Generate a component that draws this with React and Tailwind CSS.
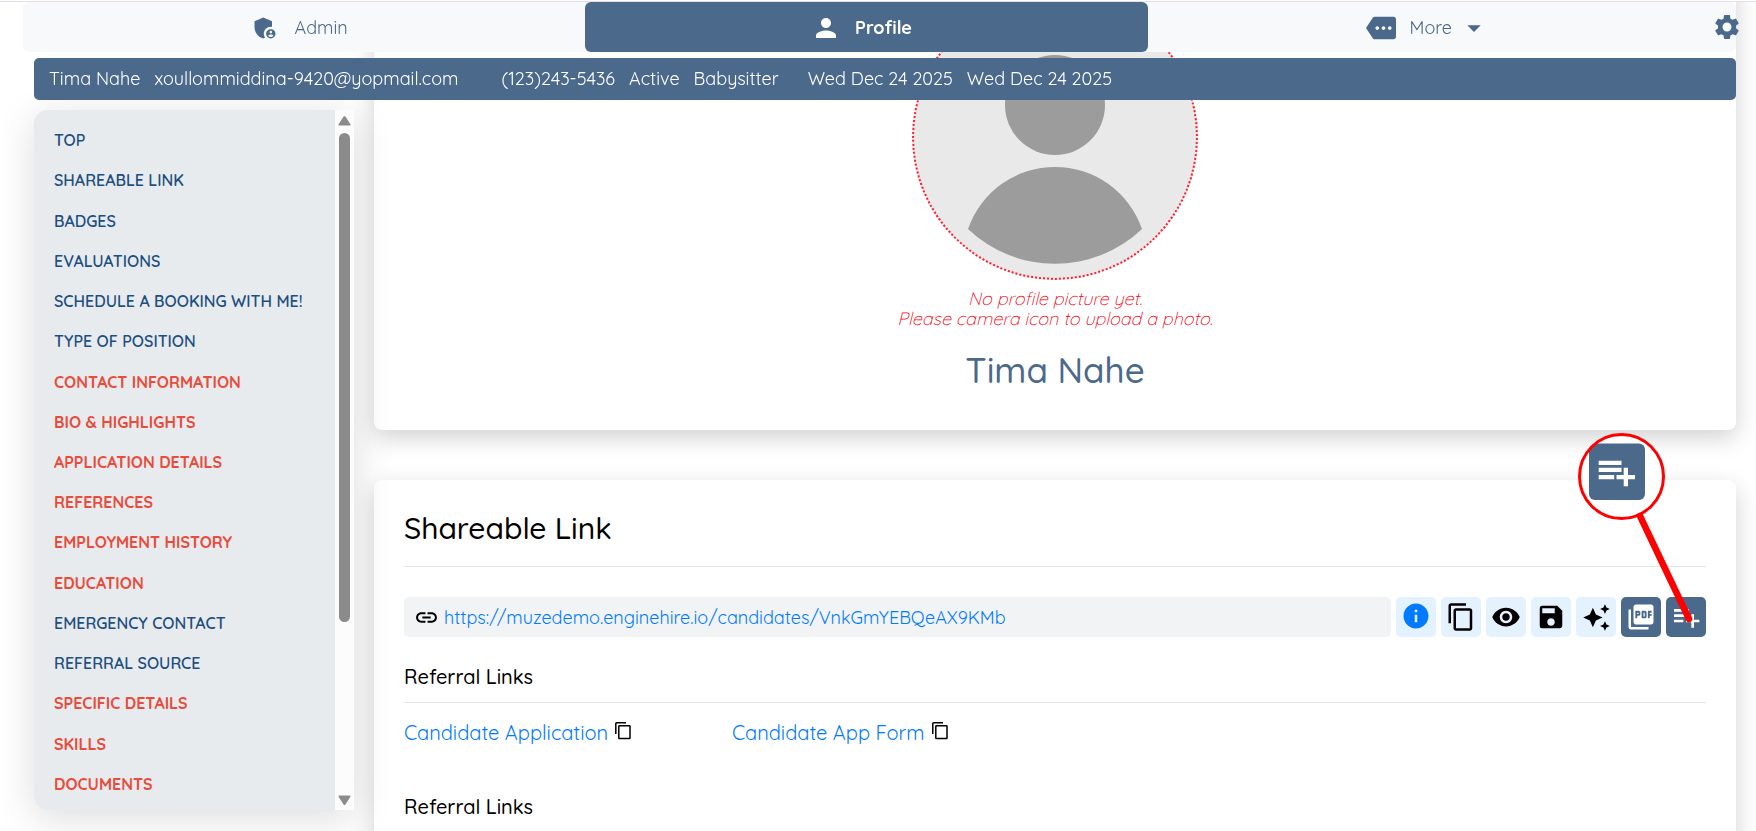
import React from "react";
import {
  MdAdminPanelSettings,
  MdArrowDropDown,
  MdAutoAwesome,
  MdContentCopy,
  MdInfo,
  MdLink,
  MdMore,
  MdPerson,
  MdPictureAsPdf,
  MdPlaylistAdd,
  MdRemoveRedEye,
  MdSave,
  MdSettings,
} from "react-icons/md";

const sections = [
  ["TOP", false],
  ["SHAREABLE LINK", false],
  ["BADGES", false],
  ["EVALUATIONS", false],
  ["SCHEDULE A BOOKING WITH ME!", false],
  ["TYPE OF POSITION", false],
  ["CONTACT INFORMATION", true],
  ["BIO & HIGHLIGHTS", true],
  ["APPLICATION DETAILS", true],
  ["REFERENCES", true],
  ["EMPLOYMENT HISTORY", true],
  ["EDUCATION", true],
  ["EMERGENCY CONTACT", false],
  ["REFERRAL SOURCE", false],
  ["SPECIFIC DETAILS", true],
  ["SKILLS", true],
  ["DOCUMENTS", true],
];

const actions = [
  { label: "Information", Icon: MdInfo, size: 30, tone: "bg-[#e4f1ff] text-[#007bff] pb-0.5" },
  { label: "Copy link", Icon: MdContentCopy, size: 30, tone: "bg-[#e4f1ff] text-black" },
  { label: "Preview", Icon: MdRemoveRedEye, size: 30, tone: "bg-[#e4f1ff] text-black" },
  { label: "Save", Icon: MdSave, size: 30, tone: "bg-[#e4f1ff] text-black" },
  { label: "Generate", Icon: MdAutoAwesome, size: 29, tone: "bg-[#e4f1ff] text-black" },
  { label: "Export PDF", Icon: MdPictureAsPdf, size: 30, tone: "bg-[#4b698b] text-white" },
  { label: "Add to list", Icon: MdPlaylistAdd, size: 32, tone: "bg-[#4b698b] text-white" },
];

function Header() {
  return (
    <header className="fixed inset-x-0 top-0 z-20 border-t border-white">
      <div className="border-t border-[#e6dcea] pl-[23px] pr-5">
        <nav className="flex h-[50px] rounded-md bg-[#f8f9fb] text-lg text-[#4b698b]">
          <a href="#admin" className="flex flex-1 items-center justify-center gap-4 pr-2.5 pt-0.5">
            <MdAdminPanelSettings size={28} />
            Admin
          </a>
          <a href="#profile" className="flex flex-1 items-center justify-center gap-3.5 rounded-md bg-[#4b698b] pr-2.5 pt-0.5 font-bold text-white">
            <MdPerson size={30} />
            Profile
          </a>
          <button className="flex flex-1 items-center justify-center gap-3.5 pl-1 pr-1.5 pt-0.5">
            <MdMore size={30} />
            More
            <span className="-ml-2">
              <MdArrowDropDown size={32} />
            </span>
          </button>
          <button aria-label="Settings" className="-mr-2 flex w-[34px] items-center justify-center">
            <MdSettings size={30} />
          </button>
        </nav>
      </div>
      <div className="ml-[34px] mr-5 mt-1.5 flex h-[42px] items-center gap-[14px] whitespace-nowrap rounded-[5px] bg-[#4b698b] px-[15px] text-lg text-white">
        <span>Tima Nahe</span>
        <span>xoullommiddina-9420@yopmail.com</span>
        <span className="ml-[29px]">(123)243-5436</span>
        <span>Active</span>
        <span>Babysitter</span>
        <span className="ml-[15px]">Wed Dec 24 2025</span>
        <span>Wed Dec 24 2025</span>
      </div>
    </header>
  );
}

function Sidebar() {
  return (
    <aside className="z-10 mt-[110px] flex h-[calc(100vh-131px)] w-80 shrink-0 overflow-hidden rounded-l-[14px] bg-[#e8ebee] shadow-[0_8px_40px_rgba(0,0,0,0.14)]">
      <ul className="flex flex-1 flex-col pb-1.5 pl-5 pt-2.5">
        {sections.map(([label, missing]) => (
          <li key={label} className="flex flex-1 items-center">
            <a
              href="#section"
              className={missing ? "text-base font-bold text-[#e74c3c]" : "text-base font-semibold text-[#1d4f7f]"}
            >
              {label}
            </a>
          </li>
        ))}
      </ul>
      <div aria-hidden="true" className="flex w-[19px] flex-col items-center bg-[#fcfcfc] pb-1 pt-[5px]">
        <svg width="13" height="12" viewBox="0 0 13 12" fill="#8b8b8b">
          <path d="M5.6 1.6q.9-1.2 1.8 0l5 7.6q.6 1.3-.9 1.3h-10q-1.5 0-.9-1.3z" />
        </svg>
        <div className="flex flex-1 flex-col self-stretch px-1 pt-[6px]">
          <div className="h-[74%] rounded-full bg-[#8b8b8b]" />
        </div>
        <svg width="13" height="12" viewBox="0 0 13 12" fill="#8b8b8b">
          <path d="M5.6 10.4q.9 1.2 1.8 0l5-7.6q.6-1.3-.9-1.3h-10q-1.5 0-.9 1.3z" />
        </svg>
      </div>
    </aside>
  );
}

function ProfileCard() {
  return (
    <section className="flex flex-col items-center rounded-lg bg-white pb-[38px] pt-[34px] shadow-[0_8px_24px_rgba(0,0,0,0.18)]">
      <div className="size-[286px] rounded-full border-2 border-dotted border-[#ff1f2e] bg-[#e9e9e9]">
        <svg viewBox="2 2 282 282" fill="#9c9c9c" role="img" aria-label="Profile placeholder">
          <circle cx="143" cy="111" r="50" />
          <path d="M56 235A92 92 0 0 1 230 235A126 126 0 0 1 56 235Z" />
        </svg>
      </div>
      <p className="mt-[9px] text-center text-lg/5 font-light italic text-[#f5000f]">
        No profile picture yet.
        <br />
        Please camera icon to upload a photo.
      </p>
      <h1 className="mt-[19px] text-[35px]/[44px] font-medium text-[#4b698b]">Tima Nahe</h1>
    </section>
  );
}

function CopyOutline() {
  return (
    <svg width="16" height="18" viewBox="0 0 16 18" fill="none" stroke="currentColor" strokeWidth="1.500">
      <path d="M.8 12V1.800Q.8.800 1.800.800H11" />
      <rect x="3.800" y="3.800" width="11.200" height="12.700" rx=".6" />
    </svg>
  );
}

function ReferralLink({ children }) {
  return (
    <div className="flex items-center gap-[7px]">
      <a href="#referral" className="text-xl/6 text-[#007bff]">{children}</a>
      <button aria-label="Copy referral link" className="pb-1 text-black">
        <CopyOutline />
      </button>
    </div>
  );
}

/* Enlarged view of the add-to-list button with a pointer to it. */
function Callout() {
  return (
    <svg className="pointer-events-none absolute -top-12 right-10" width="120" height="200" viewBox="0 0 120 200">
      <defs>
        <clipPath id="lens">
          <circle cx="45.5" cy="44.5" r="42" />
        </clipPath>
      </defs>
      <circle cx="45.5" cy="44.5" r="42" fill="#fff" />
      <g clipPath="url(#lens)">
        <rect x="13" y="11.5" width="56" height="56.5" rx="6" fill="#4b698b" />
        <path
          fill="#fff"
          d="M22.7 28.7h22.8V33H22.7zM22.7 35.7h22.8V40H22.7zM22.7 43h15.5v4.2H22.7zM47.7 35.7H52V43h7v4.2h-7v7h-4.3v-7h-7.2V43h7.2z"
        />
      </g>
      <circle cx="45.5" cy="44.5" r="42" fill="none" stroke="#f00" strokeWidth="3" />
      <path d="M64 84L113 187" stroke="#f00" strokeWidth="6.500" strokeLinecap="round" />
    </svg>
  );
}

function ShareCard() {
  return (
    <section className="relative mt-[50px] rounded-lg bg-white p-[30px] shadow-[0_8px_24px_rgba(0,0,0,0.18)]">
      <h2 className="border-b border-[#e2e4e6] pb-5 text-3xl/9 font-medium text-black">Shareable Link</h2>
      <div className="mt-[30px] flex gap-[5px]">
        <div className="flex h-10 flex-1 items-center gap-[5px] rounded-[5px] bg-[#f2f3f5] px-[10px]">
          <MdLink size={25} />
          <a href="#share" className="pt-0.5 text-lg text-[#007bff]">
            https://muzedemo.enginehire.io/candidates/VnkGmYEBQeAX9KMb
          </a>
        </div>
        {actions.map(({ label, Icon, size, tone }) => (
          <button key={label} aria-label={label} className={`flex size-10 items-center justify-center rounded-[5px] ${tone}`}>
            <Icon size={size} />
          </button>
        ))}
      </div>
      <h3 className="mt-[26px] border-b border-[#e2e4e6] pb-[11px] text-xl/7 font-medium text-black">Referral Links</h3>
      <div className="mt-[18px] grid grid-cols-4 gap-2.5">
        <ReferralLink>Candidate Application</ReferralLink>
        <ReferralLink>Candidate App Form</ReferralLink>
      </div>
      <h3 className="mt-12 border-b border-[#e2e4e6] pb-[11px] text-xl/7 font-medium text-black">Referral Links</h3>
      <Callout />
    </section>
  );
}

export default function App() {
  return (
    <div className="h-screen overflow-hidden bg-white font-['Quicksand','Lato',sans-serif]">
      <Header />
      <div className="flex items-start gap-5 pl-[34px] pr-5">
        <Sidebar />
        <main className="-mt-10 min-w-0 flex-1">
          <ProfileCard />
          <ShareCard />
        </main>
      </div>
    </div>
  );
}
